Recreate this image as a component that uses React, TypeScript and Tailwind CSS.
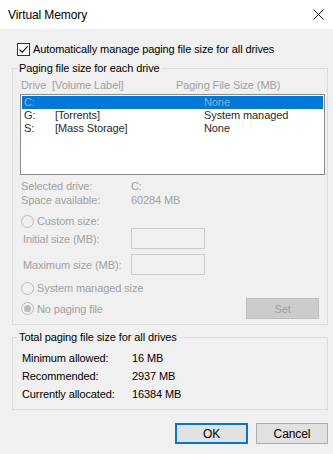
import React from 'react';

const FONT = { fontFamily: '"Liberation Sans", Arial, sans-serif' };

function Radio({ checked = false }: { checked?: boolean }) {
  return (
    <span className="flex h-[13px] w-[13px] shrink-0 items-center justify-center rounded-full border border-[#bcbcbc] bg-[#f0f0f0]">
      {checked && <span className="h-[7px] w-[7px] rounded-full bg-[#bcbcbc]" />}
    </span>
  );
}

function CheckBox() {
  return (
    <span className="flex h-[13px] w-[13px] shrink-0 items-center justify-center border border-[#333333] bg-white">
      <svg width="11" height="11" viewBox="0 0 11 11" fill="none">
        <path d="M1.5 5.5 L4.2 8.3 L9.6 2.4" stroke="#000" strokeWidth="1.1" />
      </svg>
    </span>
  );
}

const DRIVES = [
  { letter: 'C:', label: '', size: 'None', selected: true },
  { letter: 'G:', label: '[Torrents]', size: 'System managed', selected: false },
  { letter: 'S:', label: '[Mass Storage]', size: 'None', selected: false },
];

const TOTALS = [
  ['Minimum allowed:', '16 MB'],
  ['Recommended:', '2937 MB'],
  ['Currently allocated:', '16384 MB'],
];

export default function App() {
  return (
    <div
      className="flex h-[454px] w-[333px] flex-col whitespace-nowrap bg-[#f0f0f0] text-[11px] tracking-[-0.1px] text-black"
      style={FONT}
    >
      {/* title bar */}
      <div className="flex h-[29px] shrink-0 items-center justify-between bg-white pl-[8px] pr-[5px]">
        <span className="text-[12px] leading-[16px]">Virtual Memory</span>
        <svg width="11" height="11" viewBox="0 0 11 11" className="mr-[4px]">
          <path d="M0.5 0.5 L10.5 10.5 M10.5 0.5 L0.5 10.5" stroke="#111" strokeWidth="1" />
        </svg>
      </div>

      <div className="flex flex-col px-[12px] pr-[5px]">
        <label className="mt-[12px] flex h-[16px] items-center gap-[3px] pl-[5px]">
          <CheckBox />
          <span className="leading-[16px]">Automatically manage paging file size for all drives</span>
        </label>

        <fieldset className="mt-[3px] w-[316px] border border-[#dcdcdc] pb-[5px] pl-[4px] pr-[2px]">
          <legend className="px-[2px] leading-[16px]">Paging file size for each drive</legend>
          <div className="flex flex-col pl-[3px]">
            <div className="mt-[1px] flex h-[16px] items-center leading-[16px] text-[#a0a0a0]">
              <span className="w-[156px] pl-[1px]">Drive&nbsp; [Volume Label]</span>
              <span>Paging File Size (MB)</span>
            </div>
            <div className="mt-[1px] h-[81px] border border-[#8c8c8c] bg-white px-[1px] pt-[1px]">
              {DRIVES.map((d) => (
                <div
                  key={d.letter}
                  className={
                    'flex h-[13px] items-center leading-[13px] ' +
                    (d.selected ? 'bg-[#0078d7] text-[#8fb0d6]' : 'text-[#2a2a2a]')
                  }
                >
                  <span className="w-[33px] pl-[2px]">{d.letter}</span>
                  <span className="w-[149px]">{d.label}</span>
                  <span>{d.size}</span>
                </div>
              ))}
            </div>

            <div className="mt-[4px] flex flex-col text-[#a0a0a0]">
              <div className="flex h-[14px] items-center leading-[14px]">
                <span className="w-[111px] pl-[1px]">Selected drive:</span>
                <span>C:</span>
              </div>
              <div className="flex h-[14px] items-center leading-[14px]">
                <span className="w-[111px] pl-[1px]">Space available:</span>
                <span>60284 MB</span>
              </div>
            </div>

            <div className="mt-[6px] flex h-[16px] items-center gap-[3px] pl-[1px] text-[#a0a0a0]">
              <Radio />
              <span className="leading-[16px]">Custom size:</span>
            </div>

            <div className="mt-[-1px] flex flex-col gap-[5px] text-[#a0a0a0]">
              <div className="flex items-center">
                <span className="w-[111px] pl-[3px] leading-[16px]">Initial size (MB):</span>
                <span className="h-[21px] w-[74px] border border-[#cccccc] bg-[#f0f0f0]" />
              </div>
              <div className="flex items-center">
                <span className="w-[111px] pl-[3px] leading-[16px]">Maximum size (MB):</span>
                <span className="h-[21px] w-[74px] border border-[#cccccc] bg-[#f0f0f0]" />
              </div>
            </div>

            <div className="mt-[5px] flex h-[16px] items-center gap-[3px] pl-[1px] text-[#a0a0a0]">
              <Radio />
              <span className="leading-[16px]">System managed size</span>
            </div>

            <div className="mt-[2px] flex items-center justify-between text-[#a0a0a0]">
              <div className="flex items-center gap-[3px] pl-[1px]">
                <Radio checked />
                <span className="leading-[16px]">No paging file</span>
              </div>
              <span className="mr-[6px] flex h-[21px] w-[73px] items-center justify-center border border-[#bfbfbf] bg-[#cccccc] leading-[16px]">
                Set
              </span>
            </div>
          </div>
        </fieldset>

        <fieldset className="mt-[4px] w-[316px] border border-[#dcdcdc] pb-[6px] pl-[4px] pr-[2px]">
          <legend className="px-[2px] leading-[16px]">Total paging file size for all drives</legend>
          <div className="mt-[4px] flex flex-col pl-[5px]">
            {TOTALS.map(([k, v]) => (
              <div key={k} className="flex h-[18px] items-center leading-[18px]">
                <span className="w-[110px]">{k}</span>
                <span>{v}</span>
              </div>
            ))}
          </div>
        </fieldset>

        <div className="mt-[13px] flex justify-end gap-[8px]">
          <button className="flex h-[21px] w-[73px] items-center justify-center border-2 border-[#0078d7] bg-[#e1e1e1] text-[12px] leading-[16px]">
            OK
          </button>
          <button className="flex h-[21px] w-[72px] items-center justify-center border border-[#adadad] bg-[#e1e1e1] text-[12px] leading-[16px]">
            Cancel
          </button>
        </div>
      </div>
    </div>
  );
}
